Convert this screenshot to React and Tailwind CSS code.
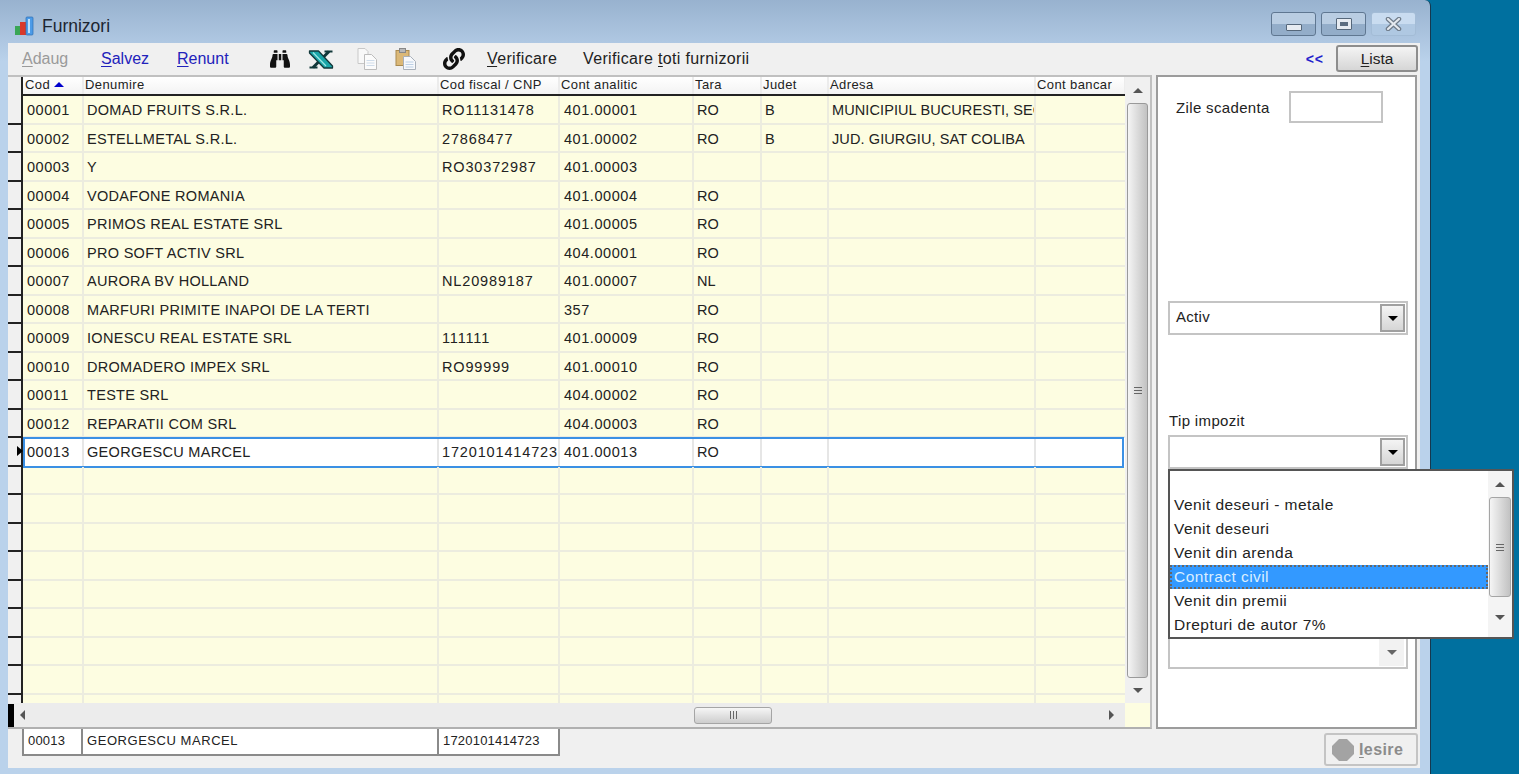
import React from "react";
import { FaBinoculars, FaLink } from "react-icons/fa";

const rows = [
  ["00001", "DOMAD FRUITS S.R.L.", "RO11131478", "401.00001", "RO", "B", "MUNICIPIUL BUCURESTI, SEC"],
  ["00002", "ESTELLMETAL S.R.L.", "27868477", "401.00002", "RO", "B", "JUD. GIURGIU, SAT COLIBA"],
  ["00003", "Y", "RO30372987", "401.00003", "", "", ""],
  ["00004", "VODAFONE ROMANIA", "", "401.00004", "RO", "", ""],
  ["00005", "PRIMOS REAL ESTATE SRL", "", "401.00005", "RO", "", ""],
  ["00006", "PRO SOFT ACTIV SRL", "", "404.00001", "RO", "", ""],
  ["00007", "AURORA BV HOLLAND", "NL20989187", "401.00007", "NL", "", ""],
  ["00008", "MARFURI PRIMITE INAPOI DE LA TERTI", "", "357", "RO", "", ""],
  ["00009", "IONESCU REAL ESTATE SRL", "111111", "401.00009", "RO", "", ""],
  ["00010", "DROMADERO IMPEX SRL", "RO99999", "401.00010", "RO", "", ""],
  ["00011", "TESTE SRL", "", "404.00002", "RO", "", ""],
  ["00012", "REPARATII COM SRL", "", "404.00003", "RO", "", ""],
  ["00013", "GEORGESCU MARCEL", "1720101414723", "401.00013", "RO", "", ""],
  ...Array.from({ length: 9 }, () => ["", "", "", "", "", "", ""]),
];

const widths = ["w-[61px]", "w-[355px]", "w-[121px]", "w-[134px]", "w-[68px]", "w-[67px]", "w-[207px]", "w-[90px]"];
const tracks = ["tracking-[0.5px]", "tracking-[0.3px]", "tracking-[0.85px]", "tracking-[0.55px]", "", "", "tracking-[0.1px]"];
const heads = ["Cod", "Denumire", "Cod fiscal / CNP", "Cont analitic", "Tara", "Judet", "Adresa", "Cont bancar"];

function Up({ className }) {
  return <span className={`block w-0 h-0 border-x-[5px] border-x-transparent border-b-[5px] ${className}`} />;
}
function Down({ className }) {
  return <span className={`block w-0 h-0 border-x-[5px] border-x-transparent border-t-[5px] ${className}`} />;
}
function Grip({ vertical }) {
  return vertical ? (
    <span className="flex flex-col gap-[2px] w-[8px]">
      <span className="h-px bg-[#666]" />
      <span className="h-px bg-[#666]" />
      <span className="h-px bg-[#666]" />
    </span>
  ) : (
    <span className="flex gap-[2px] h-[8px]">
      <span className="w-px bg-[#666]" />
      <span className="w-px bg-[#666]" />
      <span className="w-px bg-[#666]" />
    </span>
  );
}

function Ul({ children }) {
  return <span className="underline underline-offset-2">{children}</span>;
}

function Select({ children, dim }) {
  return (
    <div className="relative h-[34px] w-[240px] border-2 border-[#c4c4c4] bg-white flex items-center pl-[6px] text-[15px] tracking-[0.3px] text-[#222] box-border">
      <span className="-mt-[2px]">{children}</span>
      {dim ? (
        <span className="ml-auto mr-[2px] w-[25px] h-[28px] bg-[#f2f2f2] flex items-center justify-center">
          <Down className="border-t-[#666]" />
        </span>
      ) : (
        <span className="ml-auto mr-[1px] w-[25px] h-[28px] border-2 border-[#a0a0a0] bg-gradient-to-b from-[#f4f4f4] to-[#d6d6d6] flex items-center justify-center">
          <Down className="border-t-black" />
        </span>
      )}
    </div>
  );
}

function DocIcon({ paste }) {
  return paste ? (
    <svg width="22" height="22" viewBox="0 0 22 22">
      <rect x="1" y="2.5" width="13" height="15" fill="#dbb877" stroke="#a98a50" />
      <rect x="4.5" y="0.5" width="6" height="4" fill="#b8b8b8" stroke="#888" />
      <path d="M8.5 8.5h7l5 5v8h-12z" fill="#f7f9fc" stroke="#a8b0ba" />
      <path d="M10.5 14h8M10.5 16.5h8M10.5 19h8" stroke="#bcd0e6" />
    </svg>
  ) : (
    <svg width="21" height="22" viewBox="0 0 21 22">
      <path d="M1 .5h7l3 3v12H1z" fill="#f8f8f8" stroke="#c8c8c8" />
      <path d="M7.5 6.5h7l5 5v10h-12z" fill="#fbfbfb" stroke="#bcbcbc" />
      <path d="M9.5 12.5h8M9.5 15h8M9.5 17.5h8" stroke="#cfdcea" />
    </svg>
  );
}

function ExcelX() {
  return (
    <svg width="26" height="19" viewBox="0 0 26 19">
      <path d="M21 1.5 5 17.5" stroke="#12383a" strokeWidth="3" />
      <path d="M16.5 1.5h8M1.5 17.5h8" stroke="#12383a" strokeWidth="2" />
      <path d="M1.5 1h9l14 15v2h-8.500L1.500 3z" fill="#1aa5a8" stroke="#12383a" strokeWidth="1.300" strokeLinejoin="round" />
      <path d="M5 2.500 18 16" stroke="#9de8e4" strokeWidth="1.200" />
    </svg>
  );
}

function AppIcon() {
  return (
    <svg width="21" height="21" viewBox="0 0 21 21">
      <rect x="1" y="10" width="5" height="9" fill="#3aa655" />
      <rect x="6" y="6" width="6" height="13" fill="#d8392b" />
      <rect x="12" y="1" width="7" height="18" rx="1" fill="#4c9be8" stroke="#2d6fb3" strokeWidth="0.7" />
      <rect x="14" y="3" width="2" height="14" fill="#bfe0fb" />
    </svg>
  );
}

function WinBtn({ children, w, faded }) {
  return (
    <span
      className={`h-[24px] ${w} flex items-center justify-center rounded-[3px] border bg-gradient-to-b ${
        faded
          ? "border-[#a3bcd6] from-[#c9dcf0] from-50% to-[#afc8e2] to-50%"
          : "border-[#5f7791] from-[#b9cde2] from-50% to-[#93adc9] to-50%"
      }`}
    >
      {children}
    </span>
  );
}

function Row({ r, i }) {
  const cur = i === 12;
  return (
    <div className={`flex h-[28.5px] shrink-0 box-border relative ${cur ? "bg-white" : "border-b-2 border-[#ececdf]"}`}>
      {r.map((c, j) => (
        <div
          key={j}
          className={`${widths[j]} ${tracks[j]} shrink-0 box-border overflow-hidden whitespace-nowrap leading-[28px] ${j === 0 ? "pl-[4px]" : j === 3 ? "pl-[4px]" : "pl-[3px]"} border-r-2 ${
            cur ? "border-[#e6e6e6]" : "border-[#ececdf]"
          }`}
        >
          {c}
        </div>
      ))}
      <div className={`${widths[7]} shrink-0 box-border`} />
      {cur && <div className="absolute left-0 right-[1px] -top-px -bottom-px border-2 border-[#3b90e4] pointer-events-none" />}
    </div>
  );
}

export default function App() {
  return (
    <div className="relative w-[1519px] h-[774px] overflow-hidden flex bg-[#00709f] font-['Liberation_Sans',Arial,sans-serif] text-[#222]">
      <div className="w-[1431px] h-full shrink-0 flex flex-col rounded-tr-[6px] border-r border-[#16384f] bg-gradient-to-b from-[#98b2cf] to-[#bad2eb] from-0% to-[8%]">
        {/* title bar */}
        <div className="h-[43px] shrink-0 flex items-center pt-[9px] pl-[14px] pr-[14px]">
          <AppIcon />
          <span className="ml-[7px] text-[17.5px] text-[#1c2530]">Furnizori</span>
          <div className="ml-auto flex gap-[5px] -mt-[4px]">
            <WinBtn w="w-[45px]">
              <span className="w-[16px] h-[7px] mt-[7px] rounded-[1px] border border-[#55677a] bg-[#e6ebf1]" />
            </WinBtn>
            <WinBtn w="w-[45px]">
              <span className="w-[16px] h-[12px] rounded-[1px] border border-[#55677a] bg-[#e6ebf1] flex items-center justify-center">
                <span className="w-[8px] h-[4px] bg-[#5c6d80]" />
              </span>
            </WinBtn>
            <WinBtn w="w-[45px]" faded>
              <svg width="17" height="14" viewBox="0 0 17 14">
                <path d="M3 2l11 10M14 2 3 12" stroke="#6d7a88" strokeWidth="4.500" strokeLinecap="round" />
                <path d="M3 2l11 10M14 2 3 12" stroke="#e4e9ef" strokeWidth="2.200" strokeLinecap="round" />
              </svg>
            </WinBtn>
          </div>
        </div>

        {/* client */}
        <div className="ml-[8px] mr-[10px] h-[725px] bg-[#f0f0f0] flex flex-col">
          {/* toolbar */}
          <div className="h-[32px] shrink-0 flex items-center text-[16px] relative">
            <span className="ml-[14px] w-[53px] text-[#9a9a9a]"><Ul>A</Ul>daug</span>
            <span className="ml-[26px] w-[76px] text-[#2222bb]"><Ul>S</Ul>alvez</span>
            <span className="w-[50px] text-[#2222bb] whitespace-nowrap"><Ul>R</Ul>enunt</span>
            <span className="ml-[43px] w-[38px]"><FaBinoculars className="text-[#111] w-[20px] h-[20px]" /></span>
            <span className="w-[49px]"><ExcelX /></span>
            <span className="w-[38px]"><DocIcon /></span>
            <span className="w-[48px]"><DocIcon paste /></span>
            <span className="w-[44px]"><FaLink className="text-[#111] w-[22px] h-[22px]" /></span>
            <span className="w-[96px] tracking-[0.35px] text-[#222]"><Ul>V</Ul>erificare</span>
            <span className="tracking-[0.35px]">Verificare <Ul>t</Ul>oti furnizorii</span>
            <span className="ml-auto text-[14px] font-bold text-[#2222cc] tracking-[1px]">&lt;&lt;</span>
            <span className="ml-[12px] mr-[2px] mb-[1px] w-[82px] h-[27px] flex items-center justify-center rounded-[3px] border-2 border-[#8d8d8d] bg-gradient-to-b from-[#f4f4f4] to-[#d6d6d6] text-[15.5px]">
              <Ul>L</Ul>ista
            </span>
          </div>

          {/* main */}
          <div className="h-[654px] shrink-0 flex">
            {/* grid */}
            <div className="w-[1144px] shrink-0 flex flex-col border-b-2 border-[#b0b0b0] border-r-2 border-t-2 border-t-[#c0c0c0] border-r-[#c0c0c0] bg-[#fdfde1] box-border">
              <div className="flex-1 flex min-h-0">
                {/* row header + cells */}
                <div className="flex-1 min-w-0 flex flex-col overflow-hidden">
                  {/* head */}
                  <div className="flex h-[19px] shrink-0 border-b-2 border-[#222] bg-gradient-to-b from-white to-[#f3f3f3] box-border text-[13px] tracking-[0.4px] leading-[15px]">
                    <div className="w-[15px] shrink-0 bg-[#f0f0f0] border-r-2 border-[#222] -mb-[2px]" />
                    {heads.map((h, j) => (
                      <div key={h} className={`${widths[j]} shrink-0 box-border pb-[2px] ${j === 0 ? "pl-[2px]" : "pl-[1px]"} whitespace-nowrap border-r-2 border-[#ececec] flex items-center gap-[4px]`}>
                        {h}
                        {j === 0 && <Up className="border-b-[#0000cc]" />}
                      </div>
                    ))}
                  </div>
                  {/* body */}
                  <div className="flex-1 min-h-0 overflow-hidden flex flex-col text-[14.5px]">
                    {rows.map((r, i) => (
                      <div key={i} className="flex shrink-0 relative">
                        <div className="w-[15px] shrink-0 h-[28.5px] bg-[#f0f0f0] border-r-2 border-b-2 border-r-[#222] border-b-[#222] box-border flex items-center justify-end">
                          {i === 12 && <span className="block w-0 h-0 border-y-[5px] border-y-transparent border-l-[6px] border-l-black -mr-[2px]" />}
                        </div>
                        <div className="flex-1 min-w-0"><Row r={r} i={i} /></div>
                      </div>
                    ))}
                  </div>
                </div>
                {/* vertical scrollbar */}
                <div className="w-[25px] shrink-0 bg-[#f0f0f0] flex flex-col items-center">
                  <div className="h-[26px] shrink-0 flex items-center justify-center"><Up className="border-b-[#555]" /></div>
                  <div className="w-[21px] h-[575px] shrink-0 rounded-[3px] border border-[#9a9a9a] bg-gradient-to-r from-[#f5f5f5] to-[#c2c2c2] flex items-center justify-center">
                    <Grip vertical />
                  </div>
                  <div className="flex-1 flex items-center justify-center"><Down className="border-t-[#555]" /></div>
                </div>
              </div>
              {/* horizontal scrollbar */}
              <div className="h-[24px] shrink-0 flex items-center bg-[#ececec]">
                <span className="w-[6px] h-[23px] bg-black shrink-0" />
                <span className="ml-[6px] w-0 h-0 border-y-[5px] border-y-transparent border-r-[5px] border-r-[#555]" />
                <span className="ml-[669px] w-[78px] h-[17px] rounded-[3px] border border-[#a5a5a5] bg-gradient-to-b from-[#f6f6f6] to-[#cdcdcd] flex items-center justify-center">
                  <Grip />
                </span>
                <span className="ml-[337px] w-0 h-0 border-y-[5px] border-y-transparent border-l-[5px] border-l-[#555]" />
                <span className="ml-auto w-[25px] h-full bg-[#fdfde1]" />
              </div>
            </div>

            {/* right panel */}
            <div className="ml-[4px] w-[261px] shrink-0 border-2 border-[#9c9c9c] bg-white box-border flex flex-col pl-[10px] text-[15px] tracking-[0.35px]">
              <div className="mt-[14px] flex items-start">
                <span className="ml-[8px] mt-[6px] w-[112px] whitespace-nowrap">Zile scadenta</span>
                <span className="ml-[1px] w-[94px] h-[32px] border-2 border-[#c4c4c4]" />
              </div>
              <div className="mt-[178px]"><Select>Activ</Select></div>
              <div className="mt-[77px] mb-[5px] ml-[1px] leading-[18px]">Tip impozit</div>
              <div className="relative">
                <Select />
                <div className="absolute z-10 left-0 top-[34px] w-[346px] h-[170px] border-2 border-[#555] bg-white flex box-border">
                  <div className="flex-1 min-w-0 flex flex-col text-[15.5px] tracking-[0.45px]">
                    <div className="h-[22px] shrink-0" />
                    {["Venit deseuri - metale", "Venit deseuri", "Venit din arenda", "Contract civil", "Venit din premii", "Drepturi de autor 7%"].map((t) => (
                      <div
                        key={t}
                        className={`h-[24px] shrink-0 leading-[24px] pl-[4px] box-border ${
                          t === "Contract civil" ? "bg-[#3399ff] text-[#dcefff] outline-2 -outline-offset-2 outline-dotted outline-[#666] leading-[23px]" : ""
                        }`}
                      >
                        {t}
                      </div>
                    ))}
                  </div>
                  <div className="w-[24px] shrink-0 bg-[#f4f4f4] flex flex-col items-center">
                    <div className="h-[26px] flex items-center justify-center"><Up className="border-b-[#555]" /></div>
                    <div className="w-[22px] h-[100px] rounded-[3px] border border-[#a5a5a5] bg-gradient-to-r from-[#f5f5f5] to-[#c2c2c2] flex items-center justify-center">
                      <Grip vertical />
                    </div>
                    <div className="flex-1 flex items-center justify-center"><Down className="border-t-[#555]" /></div>
                  </div>
                </div>
              </div>
              <div className="mt-[166px]"><Select dim /></div>
            </div>
          </div>

          {/* bottom */}
          <div className="flex-1 flex items-start relative">
            <div className="ml-[14px] flex h-[27px] border-2 border-t-0 border-[#8a8a8a] bg-white text-[13px] leading-[24px] box-border">
              <div className="w-[59px] pl-[4px] border-r-2 border-[#8a8a8a] box-border tracking-[0.2px]">00013</div>
              <div className="w-[356px] pl-[4px] border-r-2 border-[#8a8a8a] box-border tracking-[0.55px]">GEORGESCU MARCEL</div>
              <div className="w-[119px] pl-[4px] tracking-[0.2px]">1720101414723</div>
            </div>
            <div className="ml-auto mr-[2px] mt-[4px] w-[94px] h-[33px] rounded-[3px] border-2 border-[#c4c4c4] flex items-center pl-[6px] gap-[5px] text-[16px] tracking-[0.4px] font-bold text-[#8c8c8c]">
              <svg width="22" height="22" viewBox="0 0 22 22" className="shrink-0">
                <path d="M7 0h8l7 7v8l-7 7H7l-7-7V7z" fill="#a3a3a3" />
              </svg>
              <span><Ul>I</Ul>esire</span>
            </div>
          </div>
        </div>
      </div>
    </div>
  );
}
